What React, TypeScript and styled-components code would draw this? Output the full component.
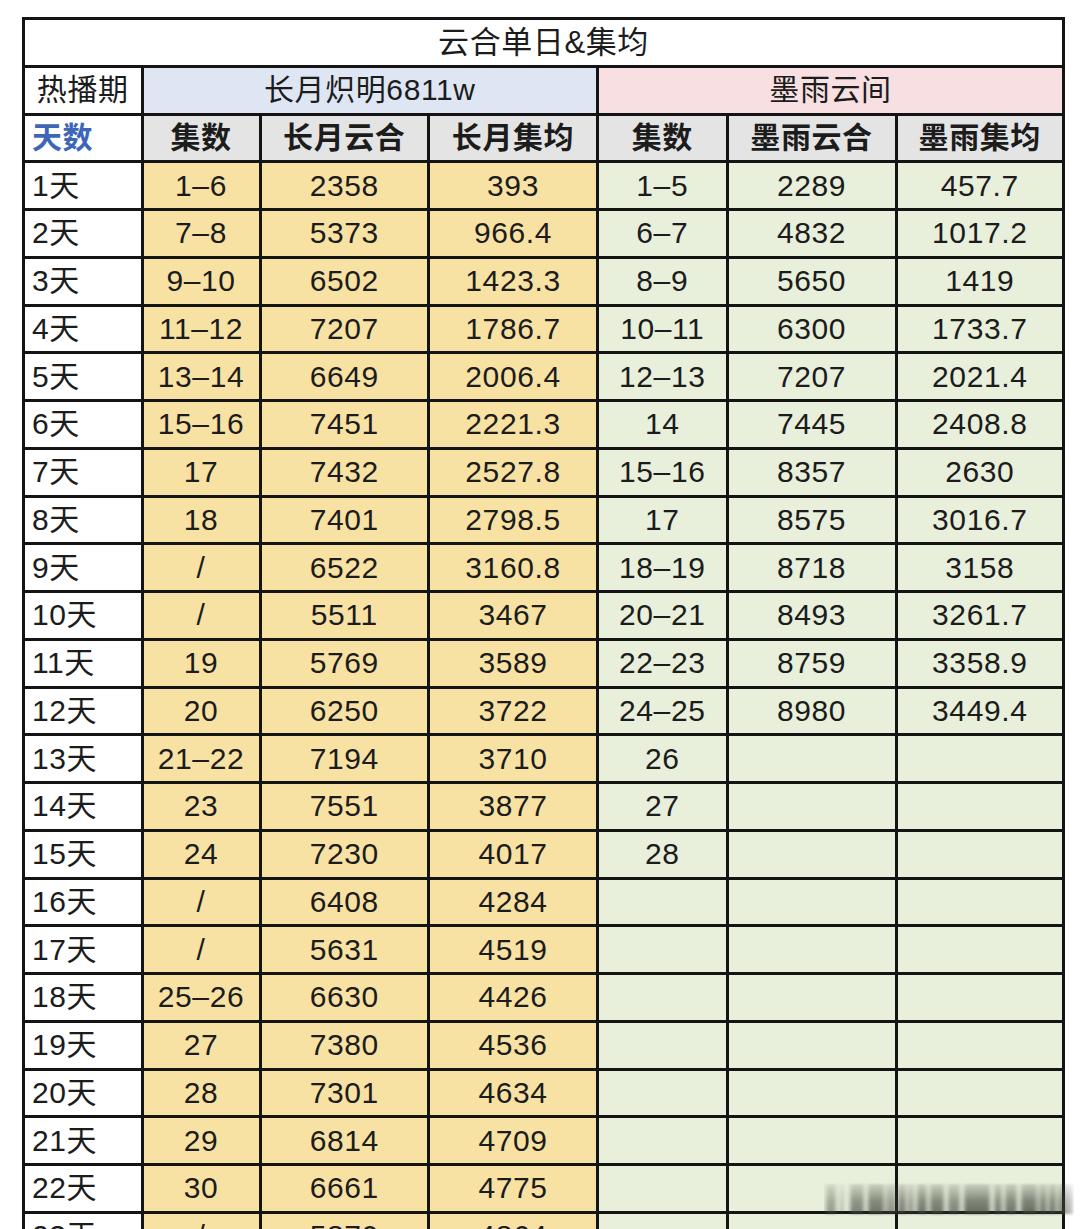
import React from "react";
import styled, { createGlobalStyle } from "styled-components";

const Global = createGlobalStyle`
  html, body { margin: 0; padding: 0; background: #ffffff; }
  body { font-family: "Liberation Sans", "Noto Sans CJK SC", sans-serif; color: #1c1c1c; }
`;

const Page = styled.div`
  position: relative;
  padding: 17px 15px 0 22px;
  width: 1080px;
  box-sizing: border-box;
`;

const Grid = styled.div`
  display: grid;
  grid-template-columns: 115.5px 115px 165.5px 166px 126.5px 166px 164.5px;
  grid-auto-rows: 44.75px;
  gap: 3px;
  background: #141414;
  border: 3px solid #141414;
  width: max-content;
`;

type CellProps = {
  $bg?: string;
  $left?: boolean;
  $bold?: boolean;
  $color?: string;
  $span?: number;
  $size?: number;
};

const Cell = styled.div<CellProps>`
  display: flex;
  align-items: center;
  justify-content: ${(p) => (p.$left ? "flex-start" : "center")};
  padding-left: ${(p) => (p.$left ? "7px" : "0")};
  box-sizing: border-box;
  line-height: 1;
  background: ${(p) => p.$bg ?? "#ffffff"};
  color: ${(p) => p.$color ?? "#1c1c1c"};
  font-weight: ${(p) => (p.$bold ? 700 : 400)};
  font-size: ${(p) => p.$size ?? 30}px;
  letter-spacing: 0.6px;
  grid-column: ${(p) => (p.$span ? `span ${p.$span}` : "auto")};
  white-space: nowrap;
  overflow: hidden;
`;

const Watermark = styled.svg`
  position: absolute;
  left: 824px;
  top: 1180px;
  width: 250px;
  height: 38px;
`;

const WHITE = "#ffffff";
const BLUE = "#dee5f3";
const PINK = "#f7dfe2";
const GRAY = "#e4e4e4";
const YELLOW = "#f8e2a3";
const GREEN = "#e8efdb";

type Row = [string, string, string, string, string, string, string];

const rows: Row[] = [
  ["1天", "1–6", "2358", "393", "1–5", "2289", "457.7"],
  ["2天", "7–8", "5373", "966.4", "6–7", "4832", "1017.2"],
  ["3天", "9–10", "6502", "1423.3", "8–9", "5650", "1419"],
  ["4天", "11–12", "7207", "1786.7", "10–11", "6300", "1733.7"],
  ["5天", "13–14", "6649", "2006.4", "12–13", "7207", "2021.4"],
  ["6天", "15–16", "7451", "2221.3", "14", "7445", "2408.8"],
  ["7天", "17", "7432", "2527.8", "15–16", "8357", "2630"],
  ["8天", "18", "7401", "2798.5", "17", "8575", "3016.7"],
  ["9天", "/", "6522", "3160.8", "18–19", "8718", "3158"],
  ["10天", "/", "5511", "3467", "20–21", "8493", "3261.7"],
  ["11天", "19", "5769", "3589", "22–23", "8759", "3358.9"],
  ["12天", "20", "6250", "3722", "24–25", "8980", "3449.4"],
  ["13天", "21–22", "7194", "3710", "26", "", ""],
  ["14天", "23", "7551", "3877", "27", "", ""],
  ["15天", "24", "7230", "4017", "28", "", ""],
  ["16天", "/", "6408", "4284", "", "", ""],
  ["17天", "/", "5631", "4519", "", "", ""],
  ["18天", "25–26", "6630", "4426", "", "", ""],
  ["19天", "27", "7380", "4536", "", "", ""],
  ["20天", "28", "7301", "4634", "", "", ""],
  ["21天", "29", "6814", "4709", "", "", ""],
  ["22天", "30", "6661", "4775", "", "", ""],
  ["23天", "/", "5870", "4864", "", "", ""],
];

const colHeads = ["集数", "长月云合", "长月集均", "集数", "墨雨云合", "墨雨集均"];

const bars: [number, number, number][] = [
  [2, 10, 0.55], [16, 4, 0.35], [26, 14, 0.7], [44, 16, 0.8], [62, 10, 0.6],
  [74, 8, 0.75], [84, 6, 0.6], [93, 10, 0.8], [106, 14, 0.8], [124, 12, 0.7],
  [140, 26, 0.85], [170, 8, 0.75], [181, 12, 0.8], [197, 16, 0.85], [215, 8, 0.75],
  [225, 7, 0.8], [234, 8, 0.7], [243, 5, 0.5],
];

export default function App() {
  return (
    <>
      <Global />
      <Page>
        <Grid>
          <Cell $span={7} $size={31}>云合单日&amp;集均</Cell>
          <Cell>热播期</Cell>
          <Cell $span={3} $bg={BLUE}>长月炽明6811w</Cell>
          <Cell $span={3} $bg={PINK}>墨雨云间</Cell>
          <Cell $left $bold $color="#3d66b8">天数</Cell>
          {colHeads.map((h, i) => (
            <Cell key={i} $bold $bg={GRAY}>{h}</Cell>
          ))}
          {rows.map((r, ri) => (
            <React.Fragment key={ri}>
              <Cell $left $bg={WHITE}>{r[0]}</Cell>
              <Cell $bg={YELLOW}>{r[1]}</Cell>
              <Cell $bg={YELLOW}>{r[2]}</Cell>
              <Cell $bg={YELLOW}>{r[3]}</Cell>
              <Cell $bg={GREEN}>{r[4]}</Cell>
              <Cell $bg={GREEN}>{r[5]}</Cell>
              <Cell $bg={GREEN}>{r[6]}</Cell>
            </React.Fragment>
          ))}
        </Grid>
        <Watermark viewBox="0 0 250 38">
          <defs>
            <linearGradient id="fade" x1="0" y1="0" x2="0" y2="1">
              <stop offset="0" stopColor="#fff" stopOpacity="0.1" />
              <stop offset="0.55" stopColor="#fff" stopOpacity="0.75" />
              <stop offset="1" stopColor="#fff" stopOpacity="1" />
            </linearGradient>
            <mask id="m">
              <rect x="0" y="0" width="250" height="38" fill="url(#fade)" />
            </mask>
            <filter id="b" x="-10%" y="-20%" width="120%" height="140%">
              <feGaussianBlur stdDeviation="2 0.8" />
            </filter>
          </defs>
          <g mask="url(#m)" filter="url(#b)">
            {bars.map(([x, w, o], i) => (
              <rect key={i} x={x} y={4} width={w} height={30} fill="#434a40" opacity={o} />
            ))}
          </g>
        </Watermark>
      </Page>
    </>
  );
}
